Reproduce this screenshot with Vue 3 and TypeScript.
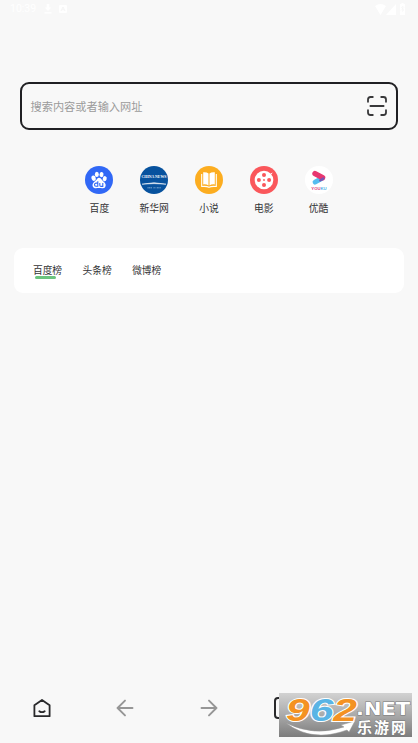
<script setup lang="ts">
import { ref } from 'vue'

interface Shortcut {
  id: string
  label: string
}

const shortcuts: Shortcut[] = [
  { id: 'baidu', label: '百度' },
  { id: 'xinhua', label: '新华网' },
  { id: 'novel', label: '小说' },
  { id: 'movie', label: '电影' },
  { id: 'youku', label: '优酷' },
]
const tabs: string[] = ['百度榜', '头条榜', '微博榜']
const active = ref(0)
</script>

<template>
  <div class="screen">
    <header class="status">
      <span class="time">10:39</span>
      <svg class="dl" width="8" height="10" viewBox="0 0 8 10"><path d="M2.7 0h2.6v3.5h2L4 7 .7 3.5h2zM.5 8.3h7v1.2h-7z" fill="#fff" /></svg>
      <svg width="8" height="8" viewBox="0 0 8 8"><rect width="8" height="8" rx="1" fill="#fff" /><path d="M2 6 4 2l2 4M2.8 4.7h2.4" fill="none" stroke="#f5f5f5" /></svg>
      <svg class="signals" width="33" height="12" viewBox="0 0 33 12" fill="#fff">
        <path d="M0 3Q5.5-1 11 3L5.5 12zM21 1v11H11zM25 1h1.5V0h2v1H30v11h-5z" />
        <path d="m26 4 3 3-1.5 1.5V3L29 4.5l-3 3" fill="none" stroke="#f5f5f5" stroke-width=".6" />
      </svg>
    </header>

    <div class="search">
      <span>搜索内容或者输入网址</span>
      <svg width="20" height="20" viewBox="0 0 20 20" fill="none" stroke="#38383a" stroke-width="1.8" stroke-linecap="round">
        <path d="M1 5.8V3.5Q1 1 3.5 1h2.3M14.2 1h2.3Q19 1 19 3.5v2.3M19 14.2v2.3q0 2.5-2.5 2.5h-2.3M5.8 19H3.5Q1 19 1 16.5v-2.3M3.4 10h13.2" />
      </svg>
    </div>

    <nav class="shortcuts">
      <a v-for="s in shortcuts" :key="s.id" class="shortcut">
        <svg v-if="s.id === 'baidu'" width="28" height="28" viewBox="0 0 28 28">
          <circle cx="14" cy="14" r="14" fill="#3168f6" />
          <g fill="#fff">
            <ellipse cx="8.6" cy="12.2" rx="2.1" ry="2.7" transform="rotate(-15 8.6 12.2)" />
            <ellipse cx="11.8" cy="8.4" rx="2" ry="2.6" />
            <ellipse cx="16.5" cy="8.6" rx="2" ry="2.6" transform="rotate(10 16.5 8.6)" />
            <ellipse cx="19.7" cy="12.7" rx="2" ry="2.6" transform="rotate(15 19.7 12.7)" />
            <path d="M14 11.8c2 0 2.5 2 4.2 3.4 2.7 2 3 3.8 2 5.7-1 1.8-3.5 1.2-6.2 1.2s-4.9.6-6-1.1c-1.1-1.9-.4-3.8 2.2-5.9 1.7-1.4 2-3.3 3.8-3.3z" />
          </g>
          <path d="M12.8 15.3v5H11q-1.5-.2-1.5-1.6t1.5-1.6h1.8M14.8 17v2.2q0 1.2 1.2 1.2h1.8V17" fill="none" stroke="#3168f6" stroke-width="1.1" />
        </svg>
        <svg v-else-if="s.id === 'xinhua'" width="28" height="28" viewBox="0 0 28 28">
          <circle cx="14" cy="14" r="14" fill="#07529e" />
          <text x="1.6" y="12.4" textLength="24.8" lengthAdjust="spacingAndGlyphs" class="xinhua-name">CHINA NEWS</text>
          <path d="M2 18.2q12-3 24 0-12-1.2-24 0z" fill="#fff" stroke="#fff" stroke-width=".5" />
          <path d="M7.5 21.8h4.8M13.5 21.8h2M16.7 21.8h4" stroke="#9bbddd" stroke-width=".9" stroke-dasharray="1.2 .4" />
        </svg>
        <svg v-else-if="s.id === 'novel'" width="28" height="28" viewBox="0 0 28 28">
          <circle cx="14" cy="14" r="14" fill="#fcad20" />
          <path d="M8.2 6.2q3.7-.3 5.3 1.4v12q-1.8-1.5-5.3-1.2zM19.8 6.2q-3.7-.3-5.3 1.4v12q1.8-1.5 5.3-1.2z" fill="#fff" />
          <path d="M6.7 8v12.5q4.8-.5 7.3.8 2.5-1.3 7.3-.8V8" fill="none" stroke="#fff" stroke-width="1.1" />
        </svg>
        <svg v-else-if="s.id === 'movie'" width="28" height="28" viewBox="0 0 28 28">
          <circle cx="14" cy="14" r="14" fill="#fa575b" />
          <circle cx="14" cy="14" r="9.3" fill="#fff" />
          <path d="m20.5 8.8 1.7-2" stroke="#fff" />
          <g fill="#fa575b"><circle cx="14" cy="8.9" r="2" /><circle cx="14" cy="19.1" r="2" /><circle cx="8.9" cy="14" r="2" /><circle cx="19.1" cy="14" r="2" /><circle cx="14" cy="14" r=".9" /></g>
        </svg>
        <svg v-else width="28" height="28" viewBox="0 0 28 28">
          <circle cx="14" cy="14" r="14" fill="#fff" />
          <path d="m10 16.2 6.5-3.6" stroke="#55bdf0" stroke-width="4.8" stroke-linecap="round" />
          <path d="m10 7.6 7.6 4.1" stroke="#e83770" stroke-width="5.4" stroke-linecap="round" />
          <path d="m15.3 14.3 3-1.7" stroke="#7656b5" stroke-width="2.4" stroke-linecap="round" />
          <text x="6.3" y="23.5" textLength="15.4" lengthAdjust="spacingAndGlyphs" class="youku-name"><tspan fill="#dc397d">YOU</tspan><tspan fill="#55b5e7">KU</tspan></text>
        </svg>
        <span>{{ s.label }}</span>
      </a>
    </nav>

    <section class="card">
      <button v-for="(tab, i) in tabs" :key="tab" class="tab" :class="{ active: active === i }" @click="active = i">{{ tab }}</button>
    </section>

    <footer class="toolbar">
      <div class="cell">
        <svg width="18" height="20" viewBox="0 0 18 20" fill="none" stroke="#29292b" stroke-width="1.8" stroke-linejoin="round" stroke-linecap="round"><path d="M1.4 7.3 9 1.9l7.6 5.4v10.9H1.4zM6.3 13.2q2.7 2 5.4 0" /></svg>
      </div>
      <div class="cell">
        <svg width="18" height="18" viewBox="0 0 18 18" fill="none" stroke="#969696" stroke-width="1.9" stroke-linecap="round" stroke-linejoin="round"><path d="M16.5 9h-15M9 1.6 1.6 9 9 16.4" /></svg>
      </div>
      <div class="cell">
        <svg width="18" height="18" viewBox="0 0 18 18" fill="none" stroke="#969696" stroke-width="1.9" stroke-linecap="round" stroke-linejoin="round"><path d="M1.5 9h15M9 1.6 16.4 9 9 16.4" /></svg>
      </div>
      <div class="cell"><span class="windows"></span></div>
      <div class="cell"></div>
    </footer>

    <svg class="watermark" width="134" height="48" viewBox="0 0 134 48">
      <defs>
        <linearGradient id="plate" x1="0" y1="0" x2="0" y2="1">
          <stop offset="0" stop-color="#d2d2d2" /><stop offset=".5" stop-color="#aaa" /><stop offset="1" stop-color="#7c7c7c" />
        </linearGradient>
      </defs>
      <rect x="0" y="2" width="133" height="44" fill="url(#plate)" />
      <path d="M7 32q28 14 58 4l-3-2 14-4-6 11-2-2Q33 52 7 32z" fill="#fff" stroke="#999" stroke-width=".5" />
      <g class="digits">
        <text x="7" y="29.5" textLength="71" lengthAdjust="spacingAndGlyphs"><tspan fill="#f49222">9</tspan><tspan fill="#59b4e5">6</tspan><tspan fill="#f49222">2</tspan></text>
      </g>
      <text x="77" y="23.5" textLength="54" lengthAdjust="spacingAndGlyphs" class="net">.NET</text>
      <text x="78" y="41.5" textLength="49" class="site">乐游网</text>
    </svg>
  </div>
</template>

<style>
body { background: #f8f8f8; }
</style>

<style scoped>
.screen {
  position: relative;
  display: flex;
  flex-direction: column;
  box-sizing: border-box;
  height: 743px;
  overflow: hidden;
  background: #f8f8f8;
  color: #333335;
  font-family: "Noto Sans CJK SC", sans-serif;
}
.status { display: flex; align-items: center; height: 17px; padding: 0 10px; color: #fff; }
.time { width: 34px; font: 10.5px/17px Roboto, sans-serif; }
.dl { margin-right: 7px; }
.signals { margin-left: auto; }
.search {
  display: flex;
  align-items: center;
  justify-content: space-between;
  box-sizing: border-box;
  height: 48px;
  margin: 65px 20px 0;
  padding: 0 9px 0 8.5px;
  border: 2px solid #202023;
  border-radius: 9px;
  color: #9b9b9b;
  font-size: 11.2px;
}
.shortcuts { display: flex; margin: 36px 72px 0; }
.shortcut { display: flex; flex: 1; flex-direction: column; align-items: center; gap: 6px; font-size: 9.8px; line-height: 16px; }
.shortcut svg { display: block; }
.xinhua-name { fill: #fff; font: bold 4.6px "Liberation Serif", serif; }
.youku-name { font: bold 4.4px "Liberation Sans", sans-serif; }
.card {
  display: flex;
  align-items: flex-start;
  gap: 20.5px;
  box-sizing: border-box;
  height: 45px;
  margin: 32px 14px 0;
  padding: 14px 19px 13px;
  border-radius: 9px;
  background: #fff;
}
.tab { position: relative; padding: 0; border: 0; background: none; color: inherit; font: 9.7px/16px "Noto Sans CJK SC", sans-serif; }
.active::after { content: ""; position: absolute; left: 2px; top: 14px; width: 21px; height: 3px; border-radius: 1.5px; background: #6bc47d; }
.toolbar { display: flex; height: 70px; margin-top: auto; }
.cell { display: flex; flex: 1; align-items: center; justify-content: center; }
.windows { box-sizing: border-box; width: 38px; height: 22px; border: 2px solid #29292b; border-radius: 4px; }
.watermark { position: absolute; left: 279px; top: 691px; overflow: visible; }
.digits { font: italic bold 32px "Liberation Sans", sans-serif; stroke: #fff; stroke-width: 2px; paint-order: stroke; }
.net { fill: #fff; stroke: #777; stroke-width: 1px; paint-order: stroke; font: bold 18px "DejaVu Sans", sans-serif; }
.site { fill: #fff; stroke: #777; stroke-width: .8px; paint-order: stroke; font: bold 15px "Noto Sans CJK SC", sans-serif; }
</style>
